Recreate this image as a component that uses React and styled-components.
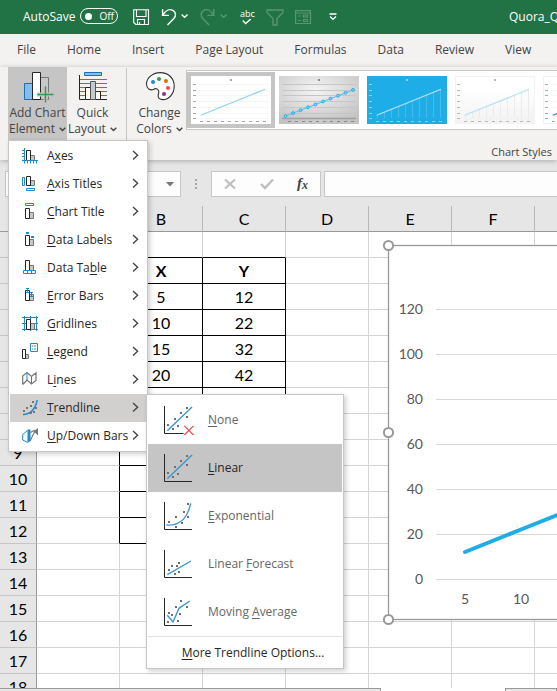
import React, { useState } from 'react';
import styled, { createGlobalStyle, ThemeProvider } from 'styled-components';

const theme = {
  green: '#217346',
  ribbon: '#f3f2f1',
  chrome: '#e6e6e6',
  border: '#c6c6c6',
  grid: '#d4d4d4',
  edge: '#999999',
  text: '#444444',
  dark: '#262626',
  blue: '#1e8bcd',
  series: '#1eade6',
  ui: '"Open Sans", "Noto Sans", sans-serif',
  sheet: 'Lato, "Open Sans", sans-serif',
};

const GlobalStyle = createGlobalStyle`
  * {
    box-sizing: border-box;
  }
  body {
    margin: 0;
    overflow: hidden;
    font-family: ${theme.ui};
    font-size: 12px;
    color: ${theme.text};
  }
  button,
  input {
    font: inherit;
    color: inherit;
  }
  button {
    padding: 0;
    border: 0;
    background: none;
    cursor: pointer;
  }
  svg {
    display: block;
    flex: none;
  }
`;

const Window = styled.div`
  display: flex;
  flex-direction: column;
  height: 100vh;
  overflow: hidden;
  background-color: white;
`;

/* title bar */

const TitleBar = styled.header`
  display: flex;
  align-items: center;
  height: 34px;
  padding: 0 0 2px 23px;
  flex: none;
  overflow: hidden;
  white-space: nowrap;
  background-color: ${props => props.theme.green};
  color: white;
`;

const AutoSave = styled.label`
  display: flex;
  align-items: center;
  gap: 5px;
`;

const Toggle = styled.span`
  display: flex;
  align-items: center;
  gap: 7px;
  width: 38px;
  height: 16px;
  padding-left: 4px;
  border: 1px solid white;
  border-radius: 8px;
  font-size: 10px;
  input {
    appearance: none;
    width: 7px;
    height: 7px;
    margin: 0;
    border-radius: 50%;
    background-color: white;
  }
`;

const QuickAccess = styled.div`
  display: flex;
  align-items: center;
  gap: 11px;
  margin-left: 15px;
  padding-top: 2px;
`;

const QuickButton = styled.button`
  opacity: ${props => (props.disabled ? 0.25 : 1)};
`;

const SpellButton = styled(QuickButton)`
  display: flex;
  flex-direction: column;
  align-items: center;
  font-size: 9px;
  line-height: 10px;
`;

const FileName = styled.span`
  margin-left: auto;
  width: 48px;
`;

/* ribbon */

const Tabs = styled.nav`
  display: flex;
  align-items: center;
  gap: 31px;
  height: 33px;
  padding: 0 0 2px 17px;
  flex: none;
  white-space: nowrap;
  background-color: ${props => props.theme.ribbon};
  a {
    color: inherit;
    text-decoration: none;
  }
`;

const Ribbon = styled.section`
  position: relative;
  z-index: 2;
  display: flex;
  height: 93px;
  padding-left: 8px;
  flex: none;
  background-color: ${props => props.theme.ribbon};
  box-shadow: 0 1px 5px rgba(0, 0, 0, 0.25);
`;

const MenuAnchor = styled.div`
  position: relative;
`;

const RibbonButton = styled.button`
  display: flex;
  flex-direction: column;
  align-items: center;
  width: ${props => props.width}px;
  height: 73px;
  padding-top: 4px;
  line-height: 16px;
  white-space: nowrap;
  background-color: ${props =>
    props['aria-expanded'] ? '#c5c5c5' : 'transparent'};
  svg {
    margin-bottom: 2px;
  }
  span {
    display: flex;
    align-items: center;
    gap: 4px;
  }
  span svg {
    margin: 0;
  }
`;

const Divider = styled.div`
  width: 1px;
  margin: 1px 6px 6px 8px;
  background-color: ${props => props.theme.border};
`;

const StylesGroup = styled.div`
  flex: 1;
  min-width: 0;
  padding-top: 3px;
  overflow: hidden;
`;

const Gallery = styled.div`
  display: flex;
  height: 60px;
  border: 1px solid ${props => props.theme.border};
  border-right: 0;
  background-color: white;
`;

const StyleButton = styled.button`
  width: 88px;
  height: 56px;
  margin-top: 1px;
  padding: 4px;
  flex: none;
  background-color: ${props =>
    props['aria-pressed'] ? '#c5c5c5' : 'transparent'};
`;

const GroupName = styled.div`
  padding: 14px 5px 0 0;
  font-size: 11px;
  line-height: 16px;
  text-align: right;
`;

/* menus */

const Menu = styled.div`
  position: absolute;
  top: 73px;
  left: 0;
  width: 140px;
  padding: 1px;
  border: 1px solid ${props => props.theme.border};
  background-color: white;
  box-shadow: 2px 2px 5px rgba(0, 0, 0, 0.2);
  color: ${props => props.theme.dark};
`;

const MenuRow = styled.div`
  position: relative;
`;

const MenuItem = styled.button`
  display: flex;
  align-items: center;
  width: 100%;
  height: 28px;
  padding: 0 7px 0 12px;
  white-space: nowrap;
  background-color: ${props => (props.$active ? '#d2d0ce' : 'transparent')};
`;

const MenuText = styled.span`
  flex: 1;
  min-width: 0;
  margin-left: 9px;
  padding-bottom: 2px;
  text-align: left;
  u {
    text-underline-offset: 2px;
  }
`;

const SubMenu = styled.div`
  position: absolute;
  top: 0;
  left: 136px;
  width: 198px;
  padding: 1px;
  border: 1px solid ${props => props.theme.border};
  background-color: white;
  box-shadow: 2px 2px 5px rgba(0, 0, 0, 0.2);
`;

const SubItem = styled.button`
  display: flex;
  align-items: center;
  gap: 5px;
  width: 100%;
  height: 48px;
  padding-left: 16px;
  color: ${props => (props.$active ? props.theme.dark : '#666666')};
  background-color: ${props => (props.$active ? '#c5c5c5' : 'transparent')};
`;

const MoreOptions = styled.button`
  width: 100%;
  height: 31px;
  padding-left: 16px;
  border-top: 1px solid #e1e1e1;
  u {
    text-underline-offset: 2px;
  }
`;

/* formula bar */

const FormulaBar = styled.div`
  display: flex;
  height: 46px;
  padding: 11px 0 9px 5px;
  flex: none;
  background-color: ${props => props.theme.chrome};
`;

const Field = styled.div`
  display: flex;
  align-items: center;
  justify-content: space-between;
  width: ${props => props.width};
  flex: ${props => (props.width ? 'none' : 1)};
  min-width: 0;
  padding: 0 ${props => props.$inset || 0}px;
  border: 1px solid ${props => props.theme.border};
  background-color: #fdfdfd;
  input {
    flex: 1;
    min-width: 0;
    padding: 0 6px;
    border: 0;
    outline: 0;
    background: none;
  }
`;

const FormulaField = styled(Field)`
  margin-left: 3px;
  border-right: 0;
`;

const Grip = styled.div`
  display: flex;
  flex-direction: column;
  align-items: center;
  justify-content: center;
  gap: 2px;
  width: 30px;
  i {
    width: 2px;
    height: 2px;
    background-color: #a6a6a6;
  }
`;

const FxButton = styled.button`
  font-family: 'Liberation Serif', serif;
  font-size: 15px;
  font-style: italic;
  font-weight: bold;
  sub {
    font-size: 12px;
    vertical-align: -1px;
  }
`;

/* sheet */

const Sheet = styled.main`
  position: relative;
  flex: 1;
  min-height: 0;
  overflow: hidden;
`;

const Grid = styled.table`
  width: 618px;
  table-layout: fixed;
  border-collapse: separate;
  border-spacing: 0;
  font-family: ${props => props.theme.sheet};
  font-size: 16px;
  line-height: 20px;
  color: black;
  th,
  td {
    height: 26px;
    padding: 0;
    text-align: center;
  }
`;

const ColumnHead = styled.th`
  width: ${props => (props.$corner ? 37 : 83)}px;
  font-weight: normal;
  background-color: ${props => props.theme.chrome};
  border-right: 1px solid #b8b8b8;
  border-bottom: 1px solid ${props => props.theme.edge};
`;

const RowHead = styled.th`
  font-weight: normal;
  background-color: ${props => props.theme.chrome};
  border-right: 1px solid ${props => props.theme.edge};
  border-bottom: 1px solid ${props => props.theme.border};
`;

const Cell = styled.td`
  font-weight: ${props => (props.$bold ? 'bold' : 'normal')};
  border-right: 1px solid
    ${props => (props.$lineRight ? 'black' : props.theme.grid)};
  border-bottom: 1px solid
    ${props => (props.$lineBottom ? 'black' : props.theme.grid)};
`;

const ChartFrame = styled.div`
  position: absolute;
  top: 33px;
  left: 382px;
  text {
    font-family: ${props => props.theme.sheet};
    font-size: 14px;
    fill: #595959;
  }
`;

const SheetTabs = styled.footer`
  display: flex;
  height: 3px;
  flex: none;
`;

const TabStrip = styled.div`
  width: ${props => props.width};
  flex: ${props => (props.width ? 'none' : 1)};
  border-top: 1px solid ${props => props.theme.edge};
  border-right: 1px solid ${props => props.theme.edge};
  background-color: ${props => props.theme.chrome};
`;

const SelectedTab = styled.div`
  width: 125px;
  border-right: 1px solid ${props => props.theme.edge};
  background-color: white;
`;

/* icons */

const Caret = () => (
  <svg width="7" height="5" fill="none" stroke="currentColor" strokeWidth="1.4">
    <path d="M.7 .8L3.5 3.6L6.3 .8" />
  </svg>
);

const Chevron = () => (
  <svg width="7" height="12" fill="none" stroke="#444" strokeWidth="1.4">
    <path d="M1 1L5.6 5.2L1 9.4" />
  </svg>
);

const SaveIcon = () => (
  <svg width="17" height="17" fill="none" stroke="white" strokeWidth="1.1">
    <path d="M.7 .7H15.5V15.5H2.8L.7 13.4ZM3.5 .7V7.5H13V.7M4.5 15.5V10.5H11.5V15.5M6.5 13V15.5" />
  </svg>
);

const UndoIcon = () => (
  <svg width="28" height="18" fill="none" stroke="white" strokeWidth="1.4">
    <path d="M1.6 1V7.4H8M1.8 7.2C4.5 2.6 8.5 .6 11.8 2.3C15 4 15.3 8 12.8 10.6L6.5 17" />
    <path d="M20.6 6.5L23.6 9.3L26.6 6.5" />
  </svg>
);

const RedoIcon = () => (
  <svg width="28" height="18" fill="none" stroke="white" strokeWidth="1.4">
    <path d="M13.8 1V7.4H7.4M13.6 7.2C11 2.6 7 .6 3.7 2.3C.6 4 .3 8 2.8 10.6L9 17" />
    <path d="M20.6 6.5L23.6 9.3L26.6 6.5" />
  </svg>
);

const CheckMark = () => (
  <svg width="16" height="6" fill="none" stroke="white" strokeWidth="1.4">
    <path d="M3.8 1.5L6.6 4.6L11.8 0" />
  </svg>
);

const FilterIcon = () => (
  <svg width="18" height="17" fill="none" stroke="white" strokeWidth="1.3">
    <path d="M1 1H17V3.5L11 9.5V16H7V9.5L1 3.5Z" />
  </svg>
);

const FormIcon = () => (
  <svg width="17" height="15" fill="none" stroke="white" strokeWidth="1.2">
    <path d="M.6 .6H15.5V13.5H.6ZM.6 3H15.5M2.8 6H6M2.8 10.5H6M8.5 5H12.5V7H8.5ZM8.5 9.5H12.5V11.5H8.5Z" />
  </svg>
);

const CustomizeIcon = () => (
  <svg width="20" height="8" fill="none" stroke="white" strokeWidth="1.4">
    <path d="M6.5 1H13.5M7.1 3.6L10 6.4L12.9 3.6" />
  </svg>
);

const AddChartIcon = () => (
  <svg width="32" height="32" fill="none">
    <path d="M2.5 12.5H10.5V28.5H2.5Z" fill="#83beec" stroke="#1e6fb5" />
    <path d="M18.5 6.5H26.5V28.5H18.5Z" fill="#c8c8c8" stroke="#767676" />
    <path d="M10.5 1.5H18.5V28.5H10.5Z" fill="white" stroke="#262626" />
    <path d="M23.5 15V32M15 23.5H32" stroke="#c5c5c5" strokeWidth="4" />
    <path d="M23.5 15.5V31.5M15.5 23.5H31.5" stroke="#2f9e44" strokeWidth="1.4" />
  </svg>
);

const QuickLayoutIcon = () => (
  <svg width="32" height="32" fill="none">
    <path d="M7.5 1.5H24.5V4.5H7.5Z" fill="#83beec" stroke="#1e6fb5" />
    <path d="M3 8.5H30M3 12.5H30M3 16.5H30M3 20.5H30M3 24.5H30" stroke="#1e8bcd" />
    <path d="M2.5 4V28.5H30" stroke="#262626" />
    <path d="M8.5 16.5H13.5V28.5H8.5ZM18.5 20.5H23.5V28.5H18.5Z" fill="white" stroke="#262626" />
    <path d="M13.5 10.5H18.5V28.5H13.5Z" fill="#c8c8c8" stroke="#555" />
  </svg>
);

const PaletteIcon = () => (
  <svg width="32" height="32">
    <path
      d="M2.5 13C2.5 6.5 9 1.6 16.5 1.6C24.5 1.6 30.2 7.5 30.2 15C30.2 23 24.8 28.6 18.8 28.6C15.6 28.6 13.6 26.8 14.2 24C14.7 21.7 15.2 21.2 14.6 19.8C13.6 17.6 11.6 17.2 9.8 18.2C7.8 19.3 6.5 19.2 4.8 18C3.2 16.8 2.5 15 2.5 13Z"
      fill="white"
      stroke="#333"
      strokeWidth="1.1"
    />
    <circle cx="9" cy="11" r="2" fill="#1e8bcd" />
    <circle cx="15" cy="8" r="2" fill="#2f9e44" />
    <circle cx="22" cy="10" r="2" fill="#e07000" />
    <circle cx="24" cy="17" r="2" fill="#f04a50" />
    <circle cx="20" cy="23" r="2" fill="#8e2f93" />
  </svg>
);

// dark bar, grey bar and blue accents of each menu icon
const menuIcons = {
  axes: {
    dark: 'M4.5 2.5H8.5V12.5H4.5Z',
    grey: 'M8.5 7.5H12.5V12.5H8.5Z',
    blue: 'M2.5 0V15.5M0 12.5H16M0 2.5H2M0 5.5H2M0 8.5H2M5.5 13V15.5M8.5 13V15.5M11.5 13V15.5M14.5 13V15.5',
  },
  axisTitles: {
    dark: 'M4.5 .5H8.5V9.5H4.5Z',
    grey: 'M8.5 4.5H12.5V9.5H8.5Z',
    blue: 'M.5 1.5H2.5V9.5H.5ZM4.5 12.5H12.5V14.5H4.5Z',
  },
  chartTitle: {
    dark: 'M3.5 4.5H7.5V14.5H3.5Z',
    grey: 'M7.5 8.5H11.5V14.5H7.5Z',
    blue: 'M3.5 -.5H11.5V1.5H3.5Z',
  },
  dataLabels: {
    dark: 'M3.5 3.5H7.5V13.5H3.5Z',
    grey: 'M7.5 7.5H11.5V13.5H7.5Z',
    blue: 'M4 .5H7M4 1.5H7M9 4.5H12M9 5.5H12',
  },
  dataTable: {
    dark: 'M3.5 .5H7.5V10.5H3.5Z',
    grey: 'M7.5 5.5H11.5V10.5H7.5Z',
    blue: 'M1.5 10.5H13.5V13.5H1.5ZM5.5 10.5V13.5M9.5 10.5V13.5',
  },
  errorBars: {
    dark: 'M3.5 2.5H7.5V12.5H3.5Z',
    grey: 'M7.5 6.5H11.5V12.5H7.5Z',
    blue: 'M5.5 .5V4.5M4 .5H7M4 4.5H7M9.5 4.5V8.5M8 4.5H11M8 8.5H11',
  },
  gridlines: {
    back: 'M0 1.5H16M0 7.5H16M0 13.5H16M2.5 0V15M8.5 0V15M14.5 0V15',
    dark: 'M4.5 3.5H8.5V13.5H4.5Z',
    grey: 'M8.5 7.5H12.5V13.5H8.5Z',
  },
  legend: {
    dark: 'M.5 5.5H3.5V14.5H.5Z',
    grey: 'M3.5 10.5H6.5V14.5H3.5Z',
    blue: 'M8.5 -.5H15.5V7.5H8.5ZM10 2H11M12 2H14M10 5H11M12 5H14',
  },
  lines: {
    line: 'M.7 12.5V4L5 .5L9.5 4.5L14 .7V8.5L9.5 12L5 8L.7 12.5',
    blue: 'M5 1V8M9.5 5V12',
  },
  trendline: {
    curve: 'M1 14.5C8 14.5 13 10 15.3 0',
    dots: [[1, 10], [4, 7], [8, 5], [10, 1], [11, 11], [13, 7], [8, 12]],
  },
  upDown: {
    line: 'M8.5 4.5L12 2.5L15.5 6M8 13L13 3',
    blue: 'M5.5 2.5L.7 6.5V12L5.5 14.5',
    fill: 'M5.5 1.5H8.5V13L5.5 15Z',
    greyFill: 'M12 3L16 0V7.5Z',
  },
};

const MenuIcon = ({ name }) => {
  const icon = menuIcons[name];
  return (
    <svg width="16" height="18" viewBox="0 -1 16 18" fill="none">
      {icon.back && <path d={icon.back} stroke={theme.blue} />}
      {icon.grey && <path d={icon.grey} fill="#c8c8c8" stroke="#767676" />}
      {icon.dark && <path d={icon.dark} fill="white" stroke="#262626" />}
      {icon.line && <path d={icon.line} stroke="#767676" strokeWidth="1.2" />}
      {icon.blue && <path d={icon.blue} stroke={theme.blue} />}
      {icon.fill && <path d={icon.fill} fill={theme.blue} />}
      {icon.greyFill && <path d={icon.greyFill} fill="#767676" />}
      {icon.curve && <path d={icon.curve} stroke={theme.blue} strokeWidth="1.4" />}
      {icon.dots &&
        icon.dots.map(([x, y]) => (
          <rect key={`${x}-${y}`} x={x} y={y} width="2" height="2" fill="#767676" />
        ))}
    </svg>
  );
};

const TrendIcon = ({ trend }) => (
  <svg width="30" height="30" viewBox="0 -1 30 30" fill="none">
    <path d={trend.cross ? 'M.5 0V27.5H19.5' : 'M.5 0V27.5H28'} stroke="#262626" />
    {trend.dots.map(([x, y]) => (
      <rect key={`${x}-${y}`} x={x - 1} y={y - 1} width="2" height="2" fill="#6e6e6e" />
    ))}
    <path d={trend.line} stroke="#3d96d2" strokeWidth="1.4" />
    {trend.cross && (
      <path d="M20.3 19.8L29.5 29M29.5 19.8L20.3 29" stroke="#f0474b" strokeWidth="1.2" />
    )}
  </svg>
);

const chartItems = [
  { name: 'A|x|es', icon: 'axes' },
  { name: '|A|xis Titles', icon: 'axisTitles' },
  { name: '|C|hart Title', icon: 'chartTitle' },
  { name: '|D|ata Labels', icon: 'dataLabels' },
  { name: 'Data Ta|b|le', icon: 'dataTable' },
  { name: '|E|rror Bars', icon: 'errorBars' },
  { name: '|G|ridlines', icon: 'gridlines' },
  { name: '|L|egend', icon: 'legend' },
  { name: 'L|i|nes', icon: 'lines' },
  { name: '|T|rendline', icon: 'trendline' },
  { name: '|U|p/Down Bars', icon: 'upDown' },
];

const linearDots = [[4, 19], [9, 23], [11, 13], [14, 20], [17, 7], [23, 11], [23, 2]];

const trends = [
  { name: '|N|one', line: 'M3.3 24.7L28 1', dots: linearDots, cross: true },
  { name: '|L|inear', line: 'M3.3 24.7L28 1', dots: linearDots },
  {
    name: '|E|xponential',
    line: 'M2.3 23C15 24 23 18 26.7 1.3',
    dots: [[5, 20], [12, 15], [12, 25], [18, 21], [20, 10], [24, 15], [24, 2]],
  },
  {
    name: 'Linear |F|orecast',
    line: 'M3.3 24.7L27 11',
    dots: [[5, 20], [8, 16], [11, 24], [13, 16], [15, 13], [15, 22]],
  },
  {
    name: 'Moving |A|verage',
    line: 'M3.3 17.3L9 24L15 10.3L25.7 3',
    dots: [[4, 24], [5, 15], [8, 17], [12, 9], [14, 23], [16, 16], [17, 3], [23, 9]],
  },
];

// the letter between bars is the access key
const KeyText = ({ text }) => {
  const [before, key, after] = text.split('|');
  return (
    <>
      {before}
      <u>{key}</u>
      {after}
    </>
  );
};

const steps = [0, 1, 2, 3, 4, 5, 6, 7, 8, 9];

const thumbs = [
  { name: 'Style 1', fill: 'white', line: '#8fd3f2', ink: '#a6a6a6', rule: '#f6f6f6' },
  { name: 'Style 2', fill: 'url(#studio)', line: '#5cc3ee', ink: '#8c8c8c', rule: '#c6c6c6', markers: true },
  { name: 'Style 3', fill: '#1eade6', line: '#b5e4f8', ink: '#8fd3f0', rule: '#1eade6', drops: '#45bbea' },
  { name: 'Style 4', fill: 'url(#fade)', line: '#b5e2f5', ink: '#b8b8b8', rule: 'none', drops: '#ebebeb', outline: true },
  { name: 'Style 5', fill: 'white', line: '#2b87b0', ink: '#8fb2c4', rule: '#f7f7f7', outline: true },
];

const Thumb = ({ thumb }) => (
  <svg width="80" height="48">
    {thumb.markers && (
      <radialGradient id="studio" cx="0.45" cy="0.3" r="0.75">
        <stop offset="0" stopColor="#f5f5f5" />
        <stop offset="1" stopColor="#c2c2c2" />
      </radialGradient>
    )}
    {thumb.name === 'Style 4' && (
      <linearGradient id="fade" x2="0" y2="1">
        <stop offset="0.3" stopColor="white" />
        <stop offset="1" stopColor="#f1f1f1" />
      </linearGradient>
    )}
    <rect width="80" height="48" fill={thumb.fill} />
    {thumb.outline && (
      <rect x=".5" y=".5" width="79" height="47" fill="none" stroke="#f3f3f3" />
    )}
    {[8, 14, 19, 25, 31, 37, 42].map(y => (
      <g key={y}>
        <path d={`M${thumb.markers ? 3 : 7} ${y + 0.5}H77`} stroke={thumb.rule} />
        {!thumb.markers && <path d={`M2 ${y + 0.5}H5`} stroke={thumb.ink} />}
      </g>
    ))}
    <path d="M39 4H41" stroke={thumb.ink} strokeWidth="2" />
    {steps.map(n => (
      <g key={n}>
        <path d={`M${9 + n * 7} 45.5H${12 + n * 7}`} stroke={thumb.ink} />
        {thumb.drops && (
          <path d={`M${10.5 + n * 7} ${39 - n * 2.9}V42`} stroke={thumb.drops} />
        )}
      </g>
    ))}
    {thumb.markers && <path d="M3 42.5H77" stroke="#a0a0a0" strokeWidth="1.4" />}
    <path
      d={thumb.markers ? 'M6.5 40L74 14' : 'M9.7 39.3L74 13.3'}
      stroke={thumb.line}
      strokeWidth="1.2"
    />
    {thumb.markers &&
      steps.map(n => (
        <circle
          key={n}
          cx={6.5 + n * 7.5}
          cy={40 - n * 2.9}
          r="1.4"
          fill="#8fd6f4"
          stroke="#1eade6"
        />
      ))}
  </svg>
);

/* chart on the sheet: the frame starts at 6,6 to leave room for its handles */

const Chart = () => {
  const points = steps.map(n => `${83 + n * 56},${313 - n * 22.5}`).join(' ');
  return (
    <svg width="700" height="388" role="img" aria-label="Y by X">
      <rect x="6.5" y="6.5" width="680" height="374" fill="white" stroke="#999" strokeWidth="1.3" />
      {[120, 100, 80, 60, 40, 20, 0].map((value, i) => (
        <g key={value}>
          <path d={`M54 ${70.5 + i * 45}H670`} stroke="#d9d9d9" />
          <text x="41" y={75 + i * 45} textAnchor="end">
            {value}
          </text>
        </g>
      ))}
      {steps.map(n => (
        <text key={n} x={83 + n * 56} y="365" textAnchor="middle">
          {(n + 1) * 5}
        </text>
      ))}
      <polyline
        points={points}
        fill="none"
        stroke={theme.series}
        strokeWidth="4"
        strokeLinecap="round"
      />
      {[6.5, 193.5, 380.5].map(y => (
        <circle key={y} cx="6.5" cy={y} r="4.6" fill="white" stroke="#999" strokeWidth="2" />
      ))}
    </svg>
  );
};

const columns = ['A', 'B', 'C', 'D', 'E', 'F', 'G'];
const rows = Array.from({ length: 18 }, (_, i) => i + 1);

const valueAt = (column, row) => {
  if (row === 2) return { B: 'X', C: 'Y' }[column];
  if (row < 3 || row > 12) return '';
  const x = (row - 2) * 5;
  return { B: x, C: x * 2 + 2 }[column];
};

const SheetCell = ({ column, row }) => {
  const inData = row > 1 && row < 13;
  return (
    <Cell
      $bold={row === 2}
      $lineRight={inData && 'ABC'.includes(column)}
      $lineBottom={row < 13 && 'BC'.includes(column)}
    >
      {valueAt(column, row)}
    </Cell>
  );
};

const tabs = ['File', 'Home', 'Insert', 'Page Layout', 'Formulas', 'Data', 'Review', 'View'];

const App = () => {
  const [menuOpen, setMenuOpen] = useState(true);
  const [autoSave, setAutoSave] = useState(false);
  const [trend, setTrend] = useState(1);
  const [chartStyle, setChartStyle] = useState(0);

  return (
    <ThemeProvider theme={theme}>
      <GlobalStyle />
      <Window>
        <TitleBar>
          <AutoSave>
            AutoSave
            <Toggle>
              <input
                type="checkbox"
                checked={autoSave}
                onChange={() => setAutoSave(on => !on)}
              />
              {autoSave ? 'On' : 'Off'}
            </Toggle>
          </AutoSave>
          <QuickAccess>
            <QuickButton aria-label="Save"><SaveIcon /></QuickButton>
            <QuickButton aria-label="Undo"><UndoIcon /></QuickButton>
            <QuickButton aria-label="Redo" disabled><RedoIcon /></QuickButton>
            <SpellButton aria-label="Spelling">
              abc
              <CheckMark />
            </SpellButton>
            <QuickButton aria-label="Filter" disabled><FilterIcon /></QuickButton>
            <QuickButton aria-label="Form" disabled><FormIcon /></QuickButton>
            <QuickButton aria-label="Customize"><CustomizeIcon /></QuickButton>
          </QuickAccess>
          <FileName>Quora_Q</FileName>
        </TitleBar>

        <Tabs>
          {tabs.map(tab => (
            <a key={tab} href="#">
              {tab}
            </a>
          ))}
        </Tabs>

        <Ribbon>
          <MenuAnchor>
            <RibbonButton
              width={59}
              aria-expanded={menuOpen}
              onClick={() => setMenuOpen(open => !open)}
            >
              <AddChartIcon />
              Add Chart
              <span>Element <Caret /></span>
            </RibbonButton>
            {menuOpen && (
              <Menu>
                {chartItems.map(item => (
                  <MenuRow key={item.icon}>
                    <MenuItem $active={item.icon === 'trendline'}>
                      <MenuIcon name={item.icon} />
                      <MenuText>
                        <KeyText text={item.name} />
                      </MenuText>
                      <Chevron />
                    </MenuItem>
                    {item.icon === 'trendline' && (
                      <SubMenu>
                        {trends.map((option, i) => (
                          <SubItem
                            key={option.name}
                            $active={trend === i}
                            onClick={() => setTrend(i)}
                          >
                            <TrendIcon trend={option} />
                            <MenuText>
                              <KeyText text={option.name} />
                            </MenuText>
                          </SubItem>
                        ))}
                        <MoreOptions>
                          <KeyText text="|M|ore Trendline Options..." />
                        </MoreOptions>
                      </SubMenu>
                    )}
                  </MenuRow>
                ))}
              </Menu>
            )}
          </MenuAnchor>
          <RibbonButton width={51}>
            <QuickLayoutIcon />
            Quick
            <span>Layout <Caret /></span>
          </RibbonButton>
          <Divider />
          <RibbonButton width={53}>
            <PaletteIcon />
            Change
            <span>Colors <Caret /></span>
          </RibbonButton>
          <StylesGroup>
            <Gallery>
              {thumbs.map((thumb, i) => (
                <StyleButton
                  key={thumb.name}
                  aria-label={thumb.name}
                  aria-pressed={chartStyle === i}
                  onClick={() => setChartStyle(i)}
                >
                  <Thumb thumb={thumb} />
                </StyleButton>
              ))}
            </Gallery>
            <GroupName>Chart Styles</GroupName>
          </StylesGroup>
        </Ribbon>

        <FormulaBar>
          <Field width="176px" $inset={5}>
            <input aria-label="Name box" />
            <svg width="9" height="5">
              <path d="M0 0H8L4 4.5Z" fill="#777" />
            </svg>
          </Field>
          <Grip>
            <i />
            <i />
            <i />
          </Grip>
          <Field width="110px" $inset={12}>
            <button aria-label="Cancel">
              <svg width="12" height="12" stroke="#bdbdbd" strokeWidth="2">
                <path d="M1 1.5L11 10.5M11 1.5L1 10.5" />
              </svg>
            </button>
            <button aria-label="Enter">
              <svg width="14" height="12" fill="none" stroke="#bdbdbd" strokeWidth="2.4">
                <path d="M1 6L5 10L13 1.5" />
              </svg>
            </button>
            <FxButton aria-label="Insert function">
              f<sub>x</sub>
            </FxButton>
          </Field>
          <FormulaField>
            <input aria-label="Formula" />
          </FormulaField>
        </FormulaBar>

        <Sheet>
          <Grid>
            <thead>
              <tr>
                <ColumnHead $corner />
                {columns.map(column => (
                  <ColumnHead key={column}>{column}</ColumnHead>
                ))}
              </tr>
            </thead>
            <tbody>
              {rows.map(row => (
                <tr key={row}>
                  <RowHead>{row}</RowHead>
                  {columns.map(column => (
                    <SheetCell key={column} column={column} row={row} />
                  ))}
                </tr>
              ))}
            </tbody>
          </Grid>
          <ChartFrame>
            <Chart />
          </ChartFrame>
        </Sheet>

        <SheetTabs>
          <TabStrip width="381px" />
          <SelectedTab />
          <TabStrip />
        </SheetTabs>
      </Window>
    </ThemeProvider>
  );
};

export default App;
